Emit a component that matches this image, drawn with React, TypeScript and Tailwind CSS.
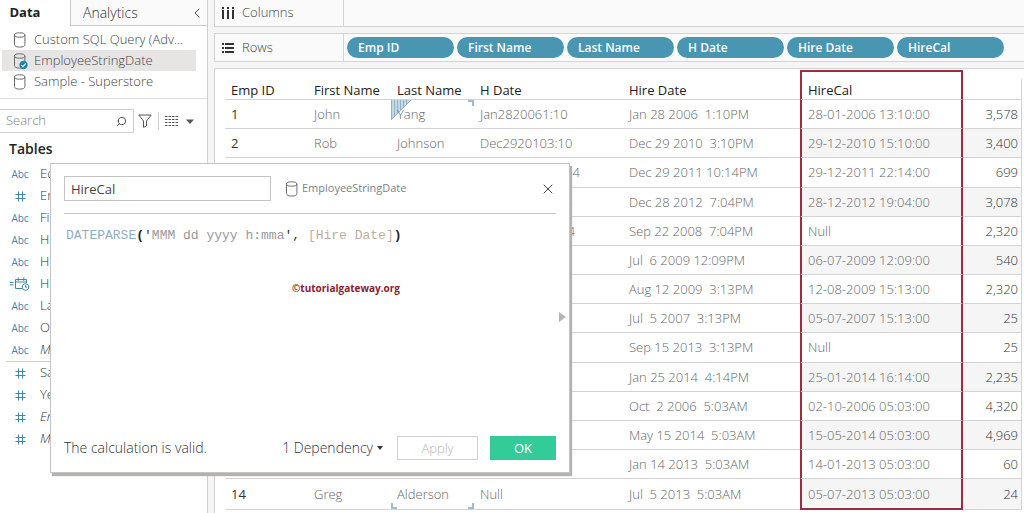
import React from "react";
import { Search, ChevronLeft, X } from "lucide-react";

type Field = { type: "abc" | "num" | "date"; name: string; italic?: boolean };

type Row = {
  first?: string;
  last?: string;
  hDate?: string;
  hireDate: string;
  hireCal: string;
  value: string;
};

const sources = ["Custom SQL Query (Adv...", "EmployeeStringDate", "Sample - Superstore"];

const dimensions: Field[] = [
  { type: "abc", name: "Ed" },
  { type: "num", name: "Em" },
  { type: "abc", name: "Fir" },
  { type: "abc", name: "H" },
  { type: "abc", name: "Hir" },
  { type: "date", name: "Hir" },
  { type: "abc", name: "La" },
  { type: "abc", name: "Oc" },
  { type: "abc", name: "M", italic: true },
];

const measures: Field[] = [
  { type: "num", name: "Sa" },
  { type: "num", name: "Ye" },
  { type: "num", name: "Em", italic: true },
  { type: "num", name: "M", italic: true },
];

const pills = ["Emp ID", "First Name", "Last Name", "H Date", "Hire Date", "HireCal"];

const rows: Row[] = [
  { first: "John", last: "Yang", hDate: "Jan2820061:10", hireDate: "Jan 28 2006  1:10PM", hireCal: "28-01-2006 13:10:00", value: "3,578" },
  { first: "Rob", last: "Johnson", hDate: "Dec2920103:10", hireDate: "Dec 29 2010  3:10PM", hireCal: "29-12-2010 15:10:00", value: "3,400" },
  { hDate: "Dec29201110:14", hireDate: "Dec 29 2011 10:14PM", hireCal: "29-12-2011 22:14:00", value: "699" },
  { hDate: "Dec2820127:04", hireDate: "Dec 28 2012  7:04PM", hireCal: "28-12-2012 19:04:00", value: "3,078" },
  { hDate: "Sep 2220087:04", hireDate: "Sep 22 2008  7:04PM", hireCal: "Null", value: "2,320" },
  { hireDate: "Jul  6 2009 12:09PM", hireCal: "06-07-2009 12:09:00", value: "540" },
  { hireDate: "Aug 12 2009  3:13PM", hireCal: "12-08-2009 15:13:00", value: "2,320" },
  { hireDate: "Jul  5 2007  3:13PM", hireCal: "05-07-2007 15:13:00", value: "25" },
  { hireDate: "Sep 15 2013  3:13PM", hireCal: "Null", value: "25" },
  { hireDate: "Jan 25 2014  4:14PM", hireCal: "25-01-2014 16:14:00", value: "2,235" },
  { hireDate: "Oct  2 2006  5:03AM", hireCal: "02-10-2006 05:03:00", value: "4,320" },
  { hireDate: "May 15 2014  5:03AM", hireCal: "15-05-2014 05:03:00", value: "4,969" },
  { hireDate: "Jan 14 2013  5:03AM", hireCal: "14-01-2013 05:03:00", value: "60" },
  { first: "Greg", last: "Alderson", hDate: "Null", hireDate: "Jul  5 2013  5:03AM", hireCal: "05-07-2013 05:03:00", value: "24" },
];

const Cylinder = ({ checked }: { checked?: boolean }) => (
  <svg width="16" height="18" viewBox="0 0 16 18" fill="none" className="shrink-0">
    <path d="M2.5 4v9.5c0 1.6 1.6 2.6 5.2 2.6s5.2-1 5.2-2.6V4" stroke="#6b6b6b" />
    <ellipse cx="7.7" cy="4" rx="5.2" ry="2.2" stroke="#6b6b6b" />
    {checked && (
      <>
        <circle cx="11.5" cy="13" r="4.2" fill="#1d86ad" />
        <path d="M9.4 13.1l1.6 1.6 2.7-3.2" stroke="#fff" strokeWidth="1.1" />
      </>
    )}
  </svg>
);

const FieldIcon = ({ type }: { type: Field["type"] }) => {
  if (type === "abc") {
    return <span className="text-[10px] font-medium text-[#3f86a8]">Abc</span>;
  }
  if (type === "num") {
    return (
      <svg width="11" height="11" viewBox="0 0 11 11" stroke="#3f86a8" fill="none">
        <path d="M3.5 0.5v10M7.5 0.5v10M0.5 3.5h10M0.5 7.5h10" />
      </svg>
    );
  }
  return (
    <svg width="20" height="14" viewBox="0 0 20 14" stroke="#3f86a8" fill="none">
      <path d="M0 5.5h3.5M0 7.8h3.5" />
      <path d="M12 11.5H5.5v-9h11V6M5.5 5h11M8.2 0.5V4M13.8 0.5V4" />
      <circle cx="15.5" cy="10" r="3.3" fill="#fff" />
      <path d="M15.5 8.2v2h1.7" />
    </svg>
  );
};

const FieldRow = ({ field }: { field: Field }) => (
  <li className="flex h-[22px] items-center">
    <span className="flex w-10 justify-center">
      <FieldIcon type={field.type} />
    </span>
    <span className={field.italic ? "text-[13px] italic text-[#333]" : "text-[13px] text-[#333]"}>{field.name}</span>
  </li>
);

const Sidebar = () => (
  <aside className="flex w-52 shrink-0 flex-col border-r border-[#d0d0d0] bg-white">
    <div className="flex h-[26px]">
      <button type="button" className="w-[70px] pr-5 text-center text-[13px] font-bold text-[#222]">
        Data
      </button>
      <div className="flex flex-1 items-center justify-between border-b border-l border-[#c9c9c9] bg-[#fafafa] pl-3">
        <button type="button" className="text-sm text-[#333]">
          Analytics
        </button>
        <button type="button" aria-label="Collapse pane" className="mr-0.5">
          <ChevronLeft size={16} strokeWidth={1.5} className="text-[#444]" />
        </button>
      </div>
    </div>

    {/* Data sources */}
    <ul className="border-b border-[#dcdcdc] pt-[3px] pb-1.5">
      {sources.map((s, i) => (
        <li
          key={s}
          className={
            i === 1
              ? "mr-[11px] ml-0.5 flex h-[21px] items-center gap-1.5 bg-[#e7e5e4] pl-2.5"
              : "mr-[11px] ml-0.5 flex h-[21px] items-center gap-1.5 pl-2.5"
          }
        >
          <Cylinder checked={i === 1} />
          <span className="text-[13px] whitespace-nowrap text-[#444]">{s}</span>
        </li>
      ))}
    </ul>

    <div className="mt-[10px] flex h-6 items-center">
      <label className="flex h-6 w-[134px] items-center border border-l-0 border-[#cfcfcf] pr-1.5">
        <input
          type="text"
          aria-label="Search fields"
          placeholder="Search"
          className="w-full min-w-0 pl-1.5 text-[13px] placeholder:text-[#808080] focus:outline-none"
        />
        <Search size={11} strokeWidth={2} className="shrink-0 -scale-x-100 text-[#444]" />
      </label>
      <button type="button" aria-label="Filter" className="ml-1">
        <svg width="14" height="14" viewBox="0 0 14 14" fill="none" stroke="#555">
          <path d="M0.8 1h12.4L8.5 7v5l-3 1.3V7z" />
        </svg>
      </button>
      <span className="mx-1.5 h-[18px] border-l border-[#cfcfcf]" />
      <button type="button" aria-label="View options" className="flex items-center gap-2">
        <svg width="13" height="10" viewBox="0 0 13 10" stroke="#555">
          <path d="M0 0.5h13M0 3.5h13M0 6.5h13M0 9.5h13" strokeDasharray="2.5 1" />
        </svg>
        <svg width="8" height="5" viewBox="0 0 8 5" fill="#555">
          <path d="M0 0.5h8L4 5z" />
        </svg>
      </button>
    </div>

    <h2 className="mt-1 mb-0.5 h-6 pl-[9px] text-sm leading-6 font-semibold text-[#222]">Tables</h2>
    <ul>
      {dimensions.map((f, i) => (
        <FieldRow key={i} field={f} />
      ))}
    </ul>
    <hr className="mx-1.5 border-[#cfcfcf]" />
    <ul>
      {measures.map((f, i) => (
        <FieldRow key={i} field={f} />
      ))}
    </ul>
  </aside>
);

const Shelves = () => (
  <>
    <div className="flex h-[27px] border-b border-l border-[#d4d4d4] bg-[#fafafa]">
      <div className="flex w-[129px] items-center gap-2 border-r border-[#d4d4d4] pl-[7px] text-[13px] text-[#444]">
        <svg width="12" height="12" viewBox="0 0 12 12" fill="#333">
          <path d="M0 0h2v2H0zM5 0h2v2H5zM10 0h2v2h-2zM0 3h2v9H0zM5 3h2v9H5zM10 3h2v9h-2z" />
        </svg>
        Columns
      </div>
    </div>
    <div className="mt-1.5 flex h-[29px] border-y border-l border-[#d4d4d4] bg-[#fafafa]">
      <div className="flex w-[129px] items-center gap-2 border-r border-[#d4d4d4] pl-[7px] text-[13px] text-[#444]">
        <svg width="12" height="10" viewBox="0 0 12 10" fill="#333">
          <path d="M0 0h2v2H0zM0 4h2v2H0zM0 8h2v2H0zM3 0h9v2H3zM3 4h9v2H3zM3 8h9v2H3z" />
        </svg>
        Rows
      </div>
      <div className="flex items-center gap-[3px] pl-[3px]">
        {pills.map((p) => (
          <button
            key={p}
            type="button"
            className="h-[21px] w-[107px] rounded-full bg-[#4996b3] pl-[11px] text-left text-xs font-semibold text-white"
          >
            {p}
          </button>
        ))}
      </div>
    </div>
  </>
);

const Sheet = () => (
  <div className="mt-1.5 min-h-0 flex-1 border-t border-l border-[#d4d4d4] bg-white pt-px pr-0.5 pb-[3px] pl-2.5">
    <table className="h-full w-full table-fixed border-separate border-spacing-0 text-[13px] leading-5 text-[#666]">
      <colgroup>
        <col className="w-[83px]" />
        <col className="w-[83px]" />
        <col className="w-[83px]" />
        <col className="w-[149px]" />
        <col className="w-[177px]" />
        <col className="w-[163px]" />
        <col />
      </colgroup>
      <thead>
        <tr className="h-[30px] text-left text-[#222] [&>th]:border-b [&>th]:border-[#d3d3d3] [&>th]:p-0 [&>th]:pl-1.5 [&>th]:align-bottom [&>th]:leading-[18px] [&>th]:font-normal">
          <th>Emp ID</th>
          <th>First Name</th>
          <th>Last Name</th>
          <th>H Date</th>
          <th>Hire Date</th>
          <th className="border-x-2 border-t-2 border-x-[#9e2a44]! border-t-[#9e2a44]!">HireCal</th>
          <th>
            <div className="h-5 border-r border-[#d3d3d3]" />
          </th>
        </tr>
      </thead>
      <tbody className="font-light">
        {rows.map((r, i) => {
          const lastRow = i === rows.length - 1;
          return (
            <tr
              key={i}
              className="[&>td]:border-b [&>td]:border-[#d3d3d3] [&>td]:p-0 [&>td]:pl-1.5 [&>td]:whitespace-pre even:[&>td:nth-child(n+6)]:bg-[#f5f5f5]"
            >
              <td className="font-medium text-[#333]">{r.first && i + 1}</td>
              <td>{r.first}</td>
              <td className="relative">
                {i === 0 && (
                  <>
                    <svg width="20" height="20" viewBox="0 0 20 20" className="absolute top-0 left-0">
                      <path d="M0 0h20L0 20z" fill="#c3d8e4" />
                      <path d="M0.5 0v19.5M3.5 0v16.5M6.5 0v13.5M9.5 0v10.5M12.5 0v7.5M15.5 0v4.5" stroke="#8fb3c8" />
                      <path d="M20 0L0 20" stroke="#8fb3c8" />
                    </svg>
                    <span className="absolute top-0 right-0 size-1.5 border-t-2 border-r-2 border-[#9dbdcf]" />
                  </>
                )}
                {lastRow && (
                  <>
                    <span className="absolute bottom-0 left-0 size-1.5 border-b-2 border-l-2 border-[#9dbdcf]" />
                    <span className="absolute right-0 bottom-0 size-1.5 border-r-2 border-b-2 border-[#9dbdcf]" />
                  </>
                )}
                <span className="relative">{r.last}</span>
              </td>
              <td>{r.hDate}</td>
              <td>{r.hireDate}</td>
              <td
                className={
                  lastRow
                    ? "border-x-2 border-b-2! border-[#9e2a44]!"
                    : "border-x-2 border-x-[#9e2a44]!"
                }
              >
                {r.hireCal}
              </td>
              <td className="border-r pr-[3px]! text-right text-[#333]">{r.value}</td>
            </tr>
          );
        })}
      </tbody>
    </table>
  </div>
);

const CalcDialog = () => (
  <div
    role="dialog"
    aria-label="HireCal"
    className="absolute top-[163px] left-[50px] flex w-[520px] flex-col border border-[#c4c4c4] bg-white px-[13px] font-light shadow-[2px_3px_1px_#b4b2b0]"
  >
    <div className="flex items-center border-b border-[#c4c4c4] pt-3 pb-3">
      <input
        type="text"
        aria-label="Calculation name"
        defaultValue="HireCal"
        className="h-[25px] w-[207px] border border-[#c4c4c4] px-1.5 text-[13px] font-normal text-[#444] focus:outline-none"
      />
      <span className="ml-[13px] flex flex-1 items-center gap-0.5 text-[11px] font-normal text-[#7c8288]">
        <Cylinder />
        EmployeeStringDate
      </span>
      <button type="button" aria-label="Close">
        <X size={16} strokeWidth={1.5} className="text-[#444]" />
      </button>
    </div>

    <code className="mt-3.5 pl-0.5 font-['Liberation_Mono',monospace] text-[13px] leading-4 font-normal text-[#999]">
      <span className="text-[#8fb0c2]">DATEPARSE</span>
      <b className="text-[#222]">(</b>
      <span className="text-[#333]">'</span>MMM dd yyyy h:mma<span className="text-[#333]">',</span>{" "}
      <span className="text-[#c0ae9f]">[Hire Date]</span>
      <b className="text-[#222]">)</b>
    </code>

    <p className="mt-9 pl-[72px] text-center text-[10px] leading-4 font-bold text-[#8a1c31]">©tutorialgateway.org</p>

    <div className="mt-4 -mr-2.5 flex justify-end">
      <button type="button" aria-label="Show functions">
        <svg width="7" height="10" viewBox="0 0 7 10" fill="#b5b5b5">
          <path d="M0 0l7 5-7 5z" />
        </svg>
      </button>
    </div>

    <div className="mt-[114px] mb-3 flex items-center text-sm text-[#333]">
      <span className="flex-1">The calculation is valid.</span>
      <button type="button" className="flex items-center gap-1">
        1 Dependency
        <svg width="6" height="4" viewBox="0 0 6 4" fill="#333">
          <path d="M0 0h6L3 4z" />
        </svg>
      </button>
      <button type="button" disabled className="ml-3.5 h-6 w-[81px] border border-[#d0d0d0] text-[13px] text-[#b4b4b4]">
        Apply
      </button>
      <button type="button" className="ml-3 h-6 w-[66px] bg-[#33cc99] text-[13px] font-normal text-white">
        OK
      </button>
    </div>
  </div>
);

export default function App() {
  return (
    <div className="relative flex h-screen overflow-hidden bg-[#f5f5f5] font-['Open_Sans',sans-serif] font-light">
      <Sidebar />
      <main className="ml-1.5 flex min-w-0 flex-1 flex-col">
        <Shelves />
        <Sheet />
      </main>
      <CalcDialog />
    </div>
  );
}
